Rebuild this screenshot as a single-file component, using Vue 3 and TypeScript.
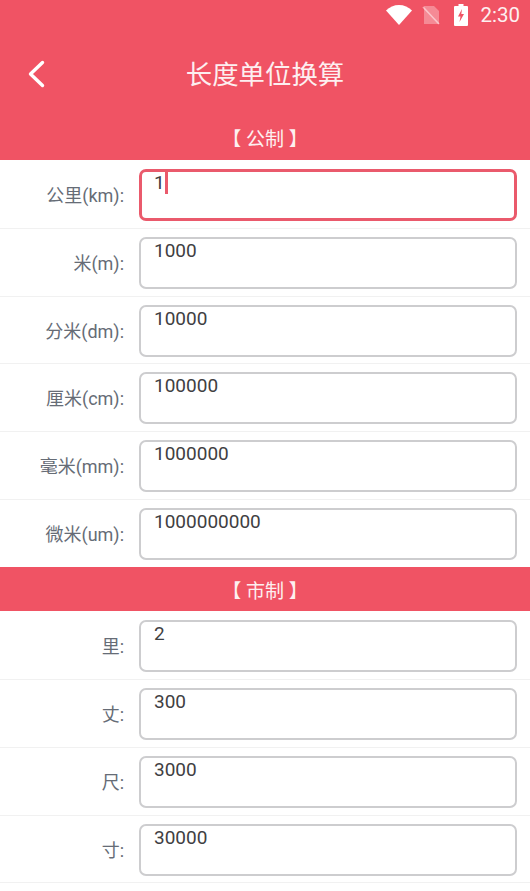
<script setup lang="ts">
interface Row { label: string; value: string; focus?: boolean }
const metric: Row[] = [
  { label: '公里(km):', value: '1', focus: true },
  { label: '米(m):', value: '1000' },
  { label: '分米(dm):', value: '10000' },
  { label: '厘米(cm):', value: '100000' },
  { label: '毫米(mm):', value: '1000000' },
  { label: '微米(um):', value: '1000000000' },
]
const market: Row[] = [
  { label: '里:', value: '2' },
  { label: '丈:', value: '300' },
  { label: '尺:', value: '3000' },
  { label: '寸:', value: '30000' },
  { label: '', value: '' },
]
</script>

<template>
  <div class="page">
    <header class="top">
      <div class="status">
        <svg class="wifi" width="26" height="20" viewBox="0 0 26 20"><path d="M0 5.500C3.500 2 8 0 13 0s9.500 2 13 5.500L13 20z" fill="#fff" /></svg>
        <svg class="sim" width="18" height="20" viewBox="0 0 18 20">
          <path d="M2 1h10l5 5v13H2z" fill="#fff" fill-opacity=".32" />
          <path d="M1 2l16 17" stroke="#fff" stroke-opacity=".5" stroke-width="1.600" />
        </svg>
        <svg class="batt" width="14" height="22" viewBox="0 0 14 22">
          <path d="M4.500 0h5v2H13a1 1 0 0 1 1 1v18a1 1 0 0 1-1 1H1a1 1 0 0 1-1-1V3a1 1 0 0 1 1-1h3.500z" fill="#fff" />
          <path d="M8 5L4 12.500h2.500L5.500 18 10 10H7.300z" fill="#f05364" />
        </svg>
        <span class="time">2:30</span>
      </div>
      <div class="nav">
        <svg class="back" width="20" height="30" viewBox="0 0 20 30"><path d="M16.500 3.500L4.500 15l12 11.500" fill="none" stroke="#fff" stroke-width="3.400" stroke-linecap="round" stroke-linejoin="round" /></svg>
        <h1 class="title">长度单位换算</h1>
      </div>
      <div class="band first">【 公制 】</div>
    </header>
    <section class="rows">
      <div v-for="r in metric" :key="r.label" class="row">
        <label class="lab">{{ r.label }}</label>
        <div class="box" :class="{ focus: r.focus }">{{ r.value }}<i v-if="r.focus" class="caret" /></div>
      </div>
    </section>
    <div class="band">【 市制 】</div>
    <section class="rows">
      <div v-for="r in market" :key="r.label" class="row">
        <label class="lab">{{ r.label }}</label>
        <div class="box">{{ r.value }}</div>
      </div>
    </section>
  </div>
</template>

<style scoped>
.page {
  width: 530px;
  height: 891px;
  overflow: hidden;
  background: #fff;
  font-family: Roboto, "Noto Sans CJK SC", sans-serif;
}
.top { background: #f05364; }
.status {
  height: 30px;
  display: flex;
  align-items: center;
  justify-content: flex-end;
  padding-right: 10px;
  color: #fff;
}
.wifi { margin-right: 10px; }
.sim { margin-right: 14px; }
.batt { margin-right: 12px; }
.time { font-size: 20.500px; line-height: 30px; color: #fdeff0; }
.nav {
  height: 88px;
  position: relative;
  display: flex;
  align-items: center;
  justify-content: center;
  padding-top: 1px;
  box-sizing: border-box;
}
.back { position: absolute; left: 26px; top: 29px; }
.title {
  margin: 0;
  font-size: 26.400px;
  font-weight: 400;
  line-height: 34px;
  color: #fdeff0;
}
.band {
  height: 44.500px;
  display: flex;
  align-items: center;
  justify-content: center;
  background: #f05364;
  color: #fdeff0;
  font-size: 19px;
}
.band.first { height: 42px; padding-bottom: 3px; box-sizing: border-box; }
.rows { background: #fff; padding-top: 1px; }
.row {
  height: 67.800px;
  box-sizing: border-box;
  display: flex;
  align-items: flex-start;
  padding: 8px 13px 0 0;
  border-bottom: 1px solid #f1f1f1;
}
.rows .row:last-child { border-bottom: 0; height: 66.800px; }
.lab {
  width: 124px;
  flex: none;
  margin-top: 15px;
  text-align: right;
  font-size: 18px;
  line-height: 24px;
  color: #666c76;
}
.box {
  flex: 1;
  margin-left: 15px;
  height: 52px;
  box-sizing: border-box;
  border: 2px solid #cdcdcf;
  border-radius: 7px;
  padding: 0 0 0 13px;
  font-size: 19px;
  line-height: 24px;
  color: #3f4042;
  background: #fff;
}
.box.focus { border: 3px solid #ea5a6c; padding-left: 12px; line-height: 22px; }
.caret {
  display: inline-block;
  width: 3px;
  height: 22px;
  margin-left: 0;
  background: #ea5a6c;
  vertical-align: top;
}
</style>
